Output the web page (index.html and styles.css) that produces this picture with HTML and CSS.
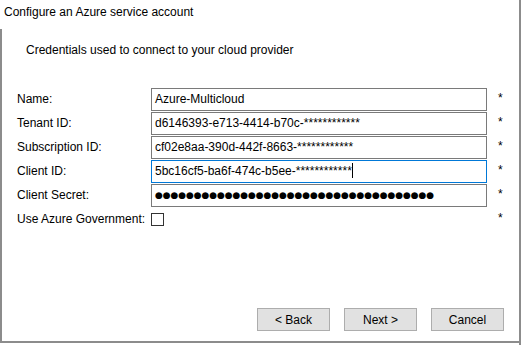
FILE: index.html
```html
<!DOCTYPE html>
<html lang="en">
<head>
  <meta charset="UTF-8">
  <title>Configure an Azure service account</title>
  <link rel="stylesheet" href="styles.css">
</head>
<body>

  <!-- Wizard page -->
  <div class="wizard">
    <div class="wizard-title">Configure an Azure service account</div>

    <div class="wizard-body">
      <p class="subtitle">Credentials used to connect to your cloud provider</p>

      <!-- Credential fields -->
      <div class="form">
        <label>Name:</label>
        <div class="textbox">Azure-Multicloud</div>
        <span class="req">*</span>

        <label>Tenant ID:</label>
        <div class="textbox">d6146393-e713-4414-b70c-************</div>
        <span class="req">*</span>

        <label>Subscription ID:</label>
        <div class="textbox">cf02e8aa-390d-442f-8663-************</div>
        <span class="req">*</span>

        <label>Client ID:</label>
        <div class="textbox focused">5bc16cf5-ba6f-474c-b5ee-************<span class="caret"></span></div>
        <span class="req">*</span>

        <label>Client Secret:</label>
        <div class="textbox secret">●●●●●●●●●●●●●●●●●●●●●●●●●●●●●●●●●●●●</div>
        <span class="req">*</span>

        <label>Use Azure Government:</label>
        <div class="check-cell"><span class="checkbox"></span></div>
        <span class="req">*</span>
      </div>

      <!-- Navigation buttons -->
      <div class="buttons">
        <button class="btn">&lt; Back</button>
        <button class="btn">Next &gt;</button>
        <button class="btn">Cancel</button>
      </div>
    </div>
  </div>

</body>
</html>
```

FILE: styles.css
```css
body {
  margin: 0;
  background: #fff;
  font-family: "Liberation Sans", Arial, sans-serif;
  font-size: 12px;
  color: #000;
}

.wizard {
  width: 519px;
  height: 345px;
  border-right: 2px solid #8c8c8c;
  display: flex;
  flex-direction: column;
}

.wizard-title {
  height: 29px;
  padding: 5px 0 0 4px;
  box-sizing: border-box;
}

/* Framed area under the title */
.wizard-body {
  flex: 1;
  border-left: 2px solid #8c8c8c;
  border-bottom: 2px solid #8c8c8c;
  margin-bottom: 2px;
  display: flex;
  flex-direction: column;
}

.subtitle {
  margin: 14px 0 0 24px;
}

.form {
  display: grid;
  grid-template-columns: 134px 336px 1fr;
  grid-auto-rows: 23px;
  row-gap: 1px;
  margin: 31px 0 0 15px;
}

.form label {
  line-height: 22px;
}

.textbox {
  border: 1px solid #7a7a7a;
  padding: 0 3px;
  line-height: 21px;
  white-space: nowrap;
  overflow: hidden;
}

.textbox.focused {
  border-color: #0078d7;
}

.caret {
  display: inline-block;
  width: 1px;
  height: 15px;
  background: #000;
  vertical-align: -3px;
}

.textbox.secret {
  font-family: "DejaVu Sans", sans-serif;
  font-size: 9px;
  letter-spacing: -0.1px;
}

.check-cell {
  display: flex;
  align-items: center;
}

.checkbox {
  width: 11px;
  height: 11px;
  border: 1px solid #333;
}

.req {
  padding-left: 11px;
  line-height: 20px;
}

.buttons {
  margin-top: auto;
  display: flex;
  justify-content: flex-end;
  gap: 14px;
  padding: 0 15px 10px 0;
}

.btn {
  width: 73px;
  height: 23px;
  background: #e1e1e1;
  border: 1px solid #adadad;
  font-family: "Liberation Sans", Arial, sans-serif;
  font-size: 12px;
  color: #000;
  padding: 0;
}
```
